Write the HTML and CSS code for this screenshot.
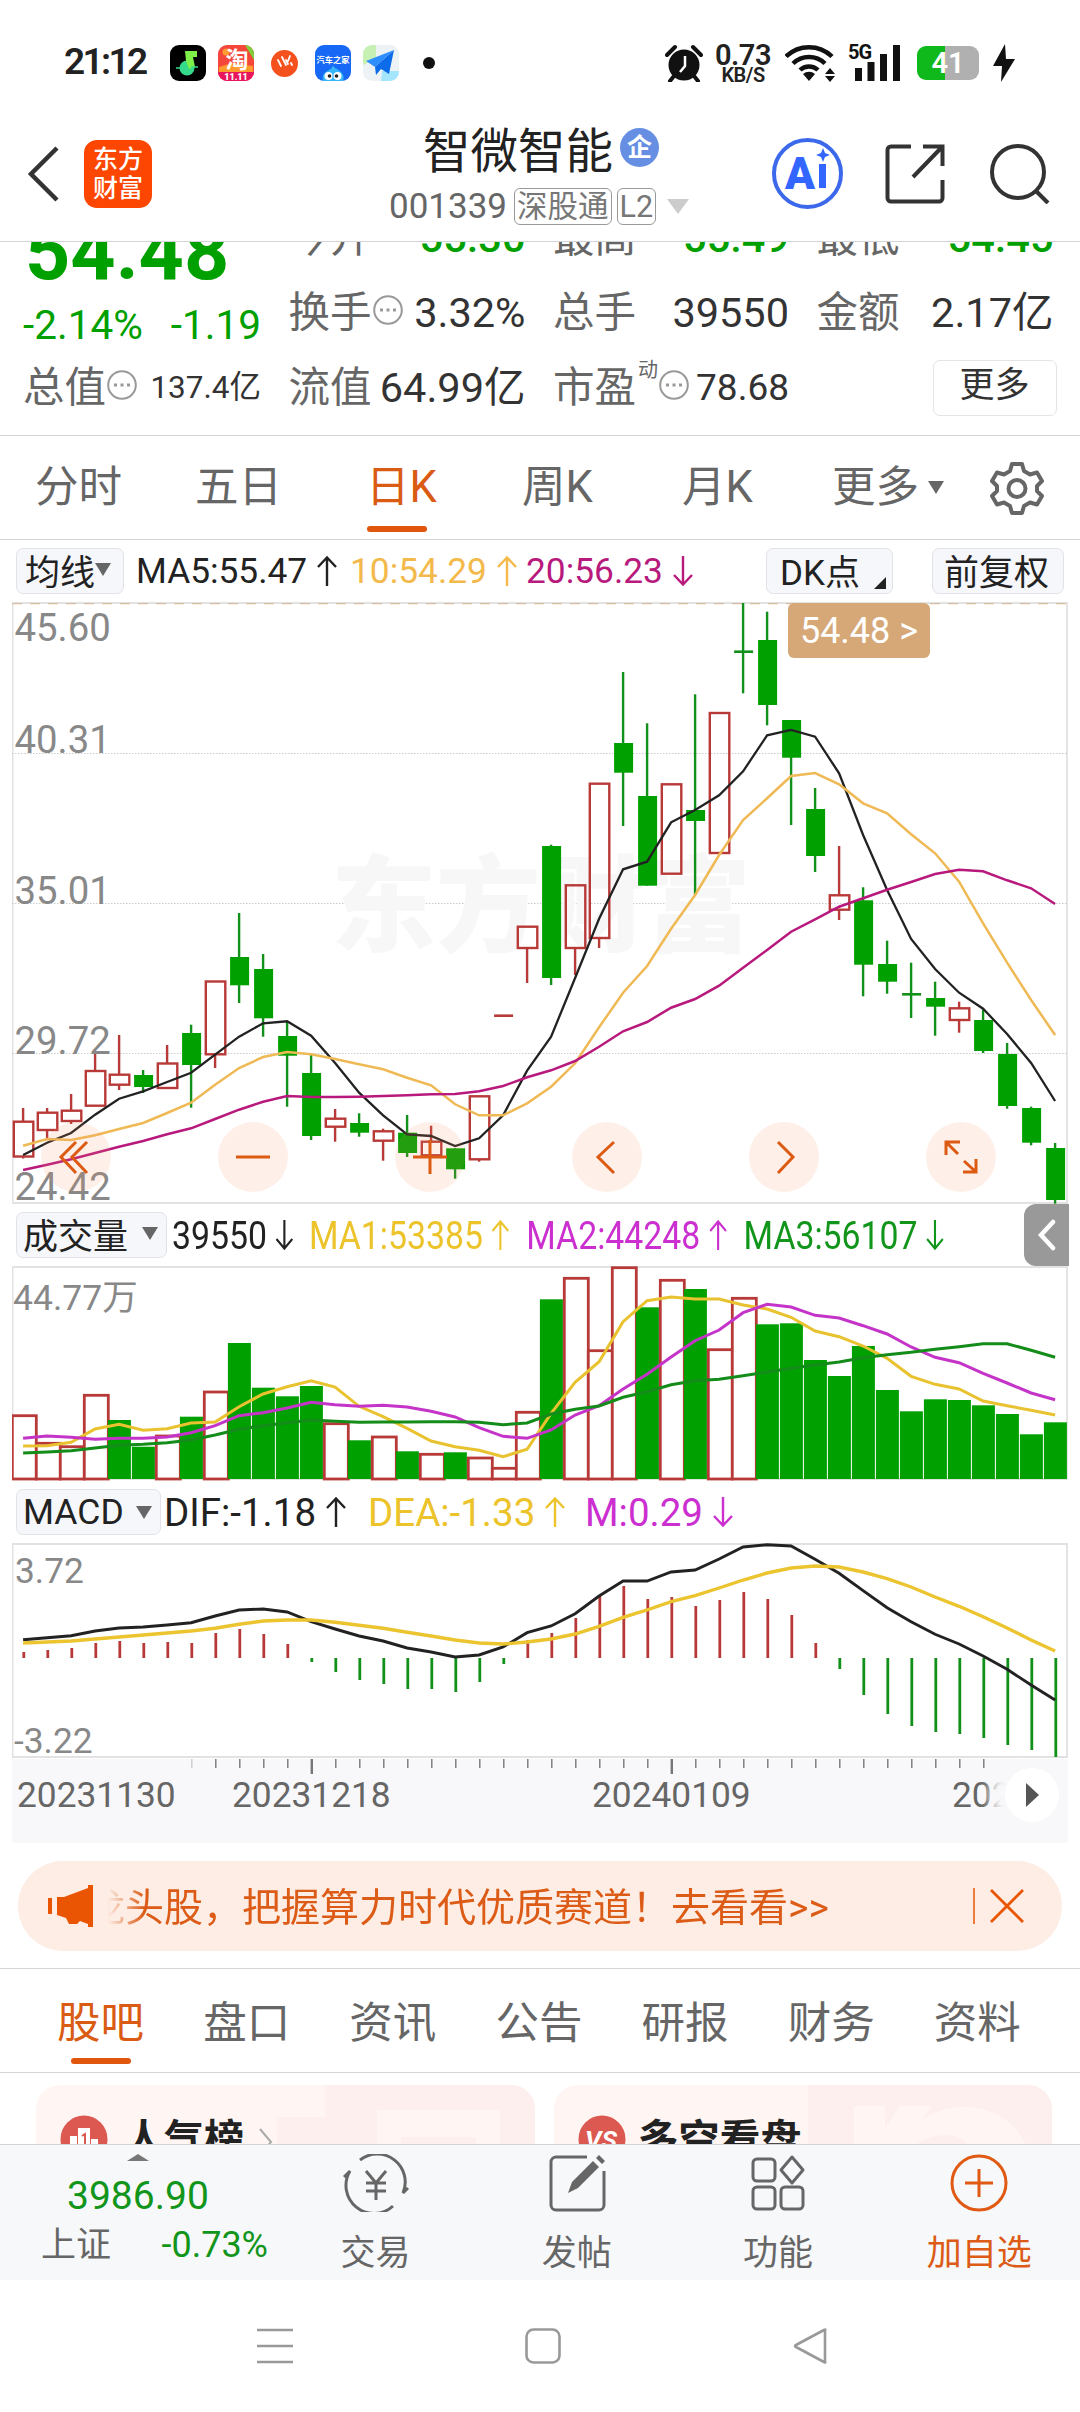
FILE: index.html
```html
<!DOCTYPE html>
<html lang="zh-CN">

<head>
    <meta charset="utf-8">
    <title>智微智能 001339</title>
    <link rel="stylesheet" href="styles.css">
</head>

<body>
    <svg class="defs" width="0" height="0">
        <symbol id="up" viewBox="0 0 20 30"><path d="M10 30V1M1 11L10 1.500L19 11"/></symbol>
        <symbol id="down" viewBox="0 0 20 30"><path d="M10 0V29M1 19L10 28.500L19 19"/></symbol>
        <symbol id="dots" viewBox="0 0 30 30">
            <circle cx="15" cy="15" r="13.800" fill="none" stroke="#999" stroke-width="2"/>
            <path d="M7 15h3M13.500 15h3M20 15h3" stroke="#999" stroke-width="3"/>
        </symbol>
    </svg>

    <!-- status bar -->
    <div class="status">
        <div class="time">21:12</div>
        <div class="apps">
            <svg width="36" height="36" viewBox="0 0 36 36">
                <rect width="36" height="36" rx="9" fill="#000"/>
                <circle cx="17" cy="23" r="7.500" fill="#35d98a"/>
                <path d="M15 6h12v6h-4l2 10-6 2-3-8z" fill="#7df04a"/>
                <path d="M6 23h8M21 22h7" stroke="#35d98a" stroke-width="1.500"/>
            </svg>
            <svg width="36" height="36" viewBox="0 0 36 36">
                <rect width="36" height="36" rx="9" fill="#f4463a"/>
                <path d="M1 22l13-4 21 3v8H1z" fill="#ff9a2e"/>
                <path d="M27 0a9 9 0 0 1 9 9v6z" fill="#7fce3c"/>
                <circle cx="8" cy="7" r="3.500" fill="#ff9b30"/>
                <path d="M0 27h36a9 9 0 0 1-9 9H9a9 9 0 0 1-9-9z" fill="#e8175d"/>
                <text x="19" y="23" class="app-tao">淘</text>
                <text x="18" y="35" class="app-1111">11.11</text>
            </svg>
            <svg class="app-round" width="27" height="27" viewBox="0 0 27 27">
                <circle cx="13.500" cy="13.500" r="13.500" fill="#f4511e"/>
                <path d="M7 10l3 6M11 7l4 8M15 10l2 4M19 6l-2 5M20 13l1 2" stroke="#fff" stroke-width="1.800" fill="none" stroke-linecap="round"/>
            </svg>
            <svg width="36" height="36" viewBox="0 0 36 36">
                <rect width="36" height="36" rx="9" fill="#1769f5"/>
                <text x="18" y="17.500" class="app-car">汽车之家</text>
                <path d="M18 20c0 3 4 3 8 7 3 3 3 6 2 9H8c-1-4 0-7 3-9 4-3 6-3 7-7z" fill="#35b6f7"/>
                <circle cx="13.500" cy="31" r="4" fill="#fff"/><circle cx="22.500" cy="31" r="4" fill="#fff"/>
                <circle cx="14.500" cy="31" r="1.800" fill="#222"/><circle cx="21.500" cy="31" r="1.800" fill="#222"/>
            </svg>
            <svg width="36" height="36" viewBox="0 0 36 36">
                <rect width="36" height="36" rx="9" fill="#edf3f5"/>
                <path d="M0 20V9a9 9 0 0 1 9-9h4v14z" fill="#c6f0b4"/>
                <path d="M18 36l1-10h17v1a9 9 0 0 1-9 9z" fill="#a5e6ff"/>
                <path d="M31 5L3 16l9 6z" fill="#2f8fff"/><path d="M31 5L12 22l1 8 5-6 8 5z" fill="#0c6be8"/>
            </svg>
        </div>
        <div class="dot"></div>
        <svg class="alarm" width="38" height="38" viewBox="0 0 38 38">
            <circle cx="19" cy="21" r="15.500" fill="#111"/>
            <path d="M2 11l8-8M36 11l-8-8M9 32l-4 5M29 32l4 5" stroke="#111" stroke-width="4" stroke-linecap="round"/>
            <path d="M20 12v10l-5 6" stroke="#fff" stroke-width="2.500" fill="none"/>
        </svg>
        <div class="speed"><b>0.73</b><span>KB/S</span></div>
        <svg class="wifi" width="50" height="38" viewBox="0 0 50 38">
            <g fill="none" stroke="#111" stroke-width="4.500">
                <path d="M1 12.500a33 33 0 0 1 46 0M8 19.500a23 23 0 0 1 32 0M15 26a13 13 0 0 1 18 0"/>
            </g>
            <path d="M24 37l-6-7a9 9 0 0 1 12 0zM45 24l5 6H40zM45 38l5-6H40z" fill="#111"/>
        </svg>
        <svg class="signal" width="54" height="38" viewBox="0 0 54 38">
            <text x="0" y="15" class="five-g">5G</text>
            <path d="M7 24h7v13H7zM19.500 18h7v19h-7zM32 10h7v27h-7zM45 1h7v36h-7z" fill="#111"/>
        </svg>
        <div class="battery"><span>41</span></div>
        <svg class="bolt" width="22" height="38" viewBox="0 0 22 38"><path d="M12 0L0 22h9l-1 16L22 15h-9z" fill="#111"/></svg>
    </div>

    <!-- title bar -->
    <div class="header">
        <svg class="back" width="34" height="56" viewBox="0 0 34 56"><path d="M30 2L4 28l26 26" fill="none" stroke="#333" stroke-width="4.500"/></svg>
        <div class="logo">东方<br>财富</div>
        <div class="stock">
            <div class="name">智微智能<span class="ent">企</span></div>
            <div class="code">001339<span class="tag">深股通</span><span class="tag">L2</span><i class="tri"></i></div>
        </div>
        <div class="ai">
            <span>A</span><svg width="14" height="42" viewBox="0 0 14 42" fill="#3366ff"><path d="M3 16h7v24H3zM7 0l2 5 5 2-5 2-2 5-2-5-5-2 5-2z"/></svg>
        </div>
        <svg class="share" width="60" height="60" viewBox="0 0 60 60">
            <path d="M26 2.500H6a3.500 3.500 0 0 0-3.500 3.500v48A3.500 3.500 0 0 0 6 57.500h48a3.500 3.500 0 0 0 3.500-3.500V36M38 2.500h19.500V22M57 3L28 33" fill="none" stroke="#333" stroke-width="4"/>
        </svg>
        <svg class="search" width="60" height="60" viewBox="0 0 60 60">
            <circle cx="28" cy="28" r="26" fill="none" stroke="#333" stroke-width="4"/><path d="M46 47l12 12" stroke="#333" stroke-width="4"/>
        </svg>
    </div>

    <!-- quote, scrolled a little under the header -->
    <div class="quote">
        <div class="quote-grid">
            <div class="price">
                <div class="last">54.48</div>
                <div class="change"><span>-2.14%</span><span>-1.19</span></div>
            </div>
            <div class="cell"><label>今开</label><span class="fall">55.30</span></div>
            <div class="cell"><label>最高</label><span class="fall">55.49</span></div>
            <div class="cell"><label>最低</label><span class="fall">54.45</span></div>
            <div class="cell"><label>换手<svg><use href="#dots"/></svg></label><span>3.32%</span></div>
            <div class="cell"><label>总手</label><span>39550</span></div>
            <div class="cell"><label>金额</label><span>2.17亿</span></div>
            <div class="cell"><label>总值<svg><use href="#dots"/></svg></label><span class="small">137.4亿</span></div>
            <div class="cell"><label>流值</label><span>64.99亿</span></div>
            <div class="cell"><label>市盈<sup>动</sup><svg><use href="#dots"/></svg></label><span class="mid">78.68</span></div>
            <div class="cell"><div class="more">更多</div></div>
        </div>
    </div>

    <!-- period tabs -->
    <div class="periods">
        <div>分时</div>
        <div>五日</div>
        <div class="on">日K</div>
        <div>周K</div>
        <div>月K</div>
        <div class="drop">更多<i class="tri"></i></div>
        <svg width="54" height="54" viewBox="0 0 54 54" fill="none" stroke="#666" stroke-width="4">
            <path d="M22 3h10l2 7 6 3.500 7-2 5 8.500-5 5v5l5 5-5 8.500-7-2-6 3.500-2 7H22l-2-7-6-3.500-7 2L2 35l5-5v-5l-5-5 5-8.500 7 2 6-3.500z" stroke-linejoin="round"/>
            <circle cx="27" cy="27.500" r="8.500"/>
        </svg>
    </div>

    <!-- k line -->
    <div class="legend ma">
        <div class="pick">均线<i class="tri"></i></div>
        <span class="black">MA5:55.47<svg><use href="#up"/></svg></span>
        <span class="amber">10:54.29<svg><use href="#up"/></svg></span>
        <span class="plum">20:56.23<svg><use href="#down"/></svg></span>
        <div class="pick dk">DK点<i></i></div>
        <div class="pick">前复权</div>
    </div>
    <div class="chart kline">
        <svg id="kline" viewBox="12 602 1056 602" width="1056" height="602"></svg>
        <div class="last-tag">54.48 &gt;</div>
        <div class="tools">
            <svg viewBox="-35 -35 70 70"><path d="M0-15L-15 0 0 16M11-15L-4 0 11 16"/></svg>
            <svg viewBox="-35 -35 70 70"><path d="M-17 0H17"/></svg>
            <svg viewBox="-35 -35 70 70"><path d="M-17 0H17M0-17V17"/></svg>
            <svg viewBox="-35 -35 70 70"><path d="M7-15L-9 0 7 16"/></svg>
            <svg viewBox="-35 -35 70 70"><path d="M-6-15L9 0-6 16"/></svg>
            <svg viewBox="-35 -35 70 70"><path d="M-1-15H-15V-2M-15-15L-3-3M3 4L15 15M2 15H15V2"/></svg>
        </div>
    </div>

    <!-- volume -->
    <div class="legend vol">
        <div class="pick">成交量<i class="tri"></i></div>
        <div class="squeeze">
            <span class="black">39550<svg><use href="#down"/></svg></span>
            <span class="yellow">MA1:53385<svg><use href="#up"/></svg></span>
            <span class="violet">MA2:44248<svg><use href="#up"/></svg></span>
            <span class="green">MA3:56107<svg><use href="#down"/></svg></span>
        </div>
        <div class="fold"><svg width="20" height="32" viewBox="0 0 20 32"><path d="M16 3L4 16l12 13" fill="none" stroke="#fff" stroke-width="4.500" stroke-linecap="round"/></svg></div>
    </div>
    <div class="chart">
        <svg id="volume" viewBox="12 1266 1056 215" width="1056" height="215"></svg>
    </div>

    <!-- macd -->
    <div class="legend macd">
        <div class="pick">MACD<i class="tri"></i></div>
        <span class="black">DIF:-1.18<svg><use href="#up"/></svg></span>
        <span class="yellow">DEA:-1.33<svg><use href="#up"/></svg></span>
        <span class="violet">M:0.29<svg><use href="#down"/></svg></span>
    </div>
    <div class="chart">
        <svg id="macd" viewBox="12 1543 1056 216" width="1056" height="216"></svg>
    </div>
    <div class="axis">
        <svg id="axis" viewBox="12 1759 1056 84" width="1056" height="84"></svg>
        <div class="next"></div>
    </div>

    <!-- notice -->
    <div class="notice">
        <svg width="48" height="42" viewBox="0 0 48 42" fill="#ea5504"><path d="M0 13h4v16H0zM9 12h7L40 3V0h5v42h-5v-3l-8-3-3 3h-8l-3-6-9-3z"/></svg>
        <div class="marquee"><span>龙头股，把握算力时代优质赛道！去看看&gt;&gt;</span></div>
        <svg class="close" width="52" height="36" viewBox="0 0 52 36" fill="none" stroke="#ea5504"><path d="M1 0v36" stroke-width="1.500"/><path d="M18 2l32 32M50 2L18 34" stroke-width="2.800"/></svg>
    </div>

    <div class="sections">
        <div class="on">股吧</div>
        <div>盘口</div>
        <div>资讯</div>
        <div>公告</div>
        <div>研报</div>
        <div>财务</div>
        <div>资料</div>
    </div>

    <div class="cards">
        <div class="card">
            <svg width="48" height="48" viewBox="0 0 48 48">
                <circle cx="24" cy="24" r="23.500" fill="#db5950"/>
                <path d="M10 21h7v20h-7zM31 24h7v17h-7zM18 13h12v28H18z" fill="#fff"/>
                <path d="M22 21l3-2v14" stroke="#db5950" stroke-width="2" fill="none"/>
            </svg>
            <b>人气榜</b>
            <svg class="chev" width="14" height="28" viewBox="0 0 14 28"><path d="M1 1l11 13L1 27" fill="none" stroke="#aaa" stroke-width="2"/></svg>
            <svg class="deco" width="210" height="60" viewBox="0 0 210 60"><path d="M0 0h210v60H-48V32H0z" fill="#fdefed"/><path d="M52 25h123v35h-24v-8H76v8H52z" fill="#fff5f3"/></svg>
        </div>
        <div class="card">
            <svg width="48" height="48" viewBox="0 0 48 48"><circle cx="24" cy="24" r="23.500" fill="#db5950"/><text x="23" y="34" class="vs">VS</text></svg>
            <b class="wide">多空看盘</b>
            <svg class="deco" width="244" height="60" viewBox="0 0 244 60"><path d="M0 0h244v60H0z" fill="#fdefed"/><path d="M46 21h31v22l15-22h32l-12 16c24-22 84-24 106 23h-60c0-12-36-14-50 0H68V43v17H46z" fill="#fff5f3"/></svg>
        </div>
    </div>

    <!-- bottom bar -->
    <div class="bottom">
        <div class="index">
            <i class="caret"></i>
            <strong>3986.90</strong>
            <div><label>上证</label><span>-0.73%</span></div>
        </div>
        <div class="item">
            <svg width="66" height="58" viewBox="0 0 66 58" fill="none" stroke="#666" stroke-width="3">
                <path d="M17 6a28 28 0 0 1 43 33l5-5M50 52A28 28 0 0 1 7 17l-6 6"/>
                <path d="M23 17l10 12 10-12M23 29h20M23 37h20M33 29v17"/>
            </svg>
            交易
        </div>
        <div class="item">
            <svg width="58" height="58" viewBox="0 0 58 58" fill="none" stroke="#666" stroke-width="3">
                <path d="M39 3H8a5 5 0 0 0-5 5v43a5 5 0 0 0 5 5h43a5 5 0 0 0 5-5V17"/>
                <path d="M20 39l4-11L45 7l6 6-21 21zM48 4l3-3 6 6-3 3z" fill="#666" stroke="none"/>
            </svg>
            发帖
        </div>
        <div class="item">
            <svg width="54" height="58" viewBox="0 0 54 58" fill="none" stroke="#666" stroke-width="3">
                <rect x="2" y="5" width="22" height="22" rx="4"/><rect x="2" y="33" width="22" height="22" rx="4"/><rect x="30" y="33" width="22" height="22" rx="4"/>
                <path d="M41 3l11 13-11 13-11-13z" stroke-linejoin="round"/>
            </svg>
            功能
        </div>
        <div class="item add">
            <svg width="58" height="58" viewBox="0 0 58 58" fill="none" stroke="#e05a14" stroke-width="3"><circle cx="29" cy="29" r="27"/><path d="M15 29h28M29 15v28"/></svg>
            加自选
        </div>
    </div>

    <!-- system keys -->
    <div class="keys">
        <svg width="36" height="36" viewBox="0 0 36 36"><path d="M0 2h36M0 18h36M0 34h36"/></svg>
        <svg width="36" height="36" viewBox="0 0 36 36"><rect x="1.500" y="1.500" width="33" height="33" rx="7"/></svg>
        <svg width="36" height="36" viewBox="0 0 36 36"><path d="M32 2v32q1 1-1 0L3 19q-2-1 0-2L31 2q2-1 1 0z"/></svg>
    </div>

    <script src="charts.js"></script>
</body>

</html>
```
FILE: styles.css
```css
* {
    box-sizing: border-box;
}

body {
    margin: 0;
    width: 1080px;
    height: 2412px;
    overflow: hidden;
    background: #fff;
    color: #222;
    font-family: Roboto, "Noto Sans CJK SC", sans-serif;
}

svg {
    display: block;
    flex: none;
}

.defs {
    position: absolute;
}

.tri {
    border: 8px solid transparent;
    border-top: 13px solid #666;
    border-bottom: 0;
}

/* status bar */
.status {
    display: flex;
    align-items: center;
    height: 106px;
    padding: 20px 0 0 64px;
}

.time {
    width: 106px;
    margin-top: -3px;
    font-size: 37px;
    font-weight: 600;
    letter-spacing: -2.6px;
}

.apps {
    display: flex;
    align-items: center;
    gap: 12px;
}

.app-round {
    margin: 0 5px;
}

.app-tao {
    font-size: 23px;
    font-weight: 700;
    fill: #fff;
    text-anchor: middle;
}

.app-1111 {
    font-size: 9px;
    font-weight: 900;
    fill: #fff;
    text-anchor: middle;
}

.app-car {
    font-size: 8.2px;
    font-weight: 700;
    fill: #fff;
    text-anchor: middle;
}

.dot {
    width: 12px;
    height: 12px;
    margin: 0 230px 0 24px;
    border-radius: 50%;
    background: #111;
}

.speed {
    display: flex;
    flex-direction: column;
    align-items: center;
    width: 54px;
    margin: 0 15px 0 13px;
    font-size: 20px;
    font-weight: 600;
    letter-spacing: -0.5px;
    line-height: 17px;
}

.speed b {
    font-size: 29px;
    font-weight: 600;
    line-height: 24px;
}

.signal {
    margin: 0 15px 0 13px;
}

.five-g {
    font-size: 20px;
    font-weight: 700;
    letter-spacing: -1px;
    fill: #111;
}

.battery {
    width: 62px;
    height: 34px;
    margin-right: 14px;
    border-radius: 9px;
    background: linear-gradient(90deg, #0fb91c 28px, #b0b0b0 28px);
    color: #fff;
    font-size: 29px;
    font-weight: 600;
    line-height: 35px;
    text-align: center;
}

/* title bar */
.header {
    display: flex;
    align-items: center;
    height: 136px;
    padding: 0 28px 0 27px;
    border-bottom: 1.5px solid #d4d4d8;
}

.logo {
    width: 68px;
    height: 68px;
    margin-left: 23px;
    border-radius: 13px;
    background: #fd4602;
    color: #fff;
    font-size: 25px;
    font-weight: 500;
    line-height: 29px;
    padding-top: 5px;
    text-align: center;
}

.stock {
    width: 310px;
    margin-left: 237px;
}

.name {
    display: flex;
    align-items: center;
    height: 60px;
    margin: 5px 0 0 34px;
    font-size: 47.5px;
}

.ent {
    width: 39px;
    height: 39px;
    margin-left: 7px;
    border-radius: 50%;
    background: #668fe3;
    color: #fff;
    font-size: 25px;
    font-weight: 700;
    line-height: 39px;
    text-align: center;
}

.code {
    display: flex;
    align-items: center;
    height: 58px;
    color: #666;
    font-size: 35px;
}

.code .tag {
    height: 37px;
    margin-left: 7px;
    padding: 0 2px;
    border: 1.5px solid #999;
    border-radius: 6px;
    color: #777;
    font-size: 30.5px;
    line-height: 35px;
}

.code .tag + .tag {
    margin-left: 5px;
}

.code .tri {
    margin-left: 11px;
    border-width: 15px 11px 0;
    border-color: #ccc transparent;
}

.ai {
    display: flex;
    align-items: center;
    justify-content: center;
    gap: 1px;
    width: 71px;
    height: 71px;
    margin-left: 73px;
    border: 4px solid #3c69eb;
    border-radius: 50%;
    color: #3366ff;
    font-size: 44px;
    font-weight: 900;
}

.ai svg {
    margin-top: -10px;
}

.share {
    margin-left: 42px;
}

.search {
    margin-left: 45px;
}

/* quote */
.quote {
    height: 194px;
    overflow: hidden;
    border-bottom: 1.5px solid #d4d4d8;
}

.quote-grid {
    display: grid;
    grid-template-columns: 238px 237px 236px 237px;
    grid-auto-rows: 75px;
    column-gap: 27.5px;
    margin-top: -42px;
    padding-left: 23px;
}

.price {
    grid-row: span 2;
    padding-top: 12px;
    color: #00a000;
}

.last {
    height: 80px;
    padding-left: 2px;
    font-size: 79px;
    font-weight: 700;
    line-height: 80px;
}

.change {
    display: flex;
    justify-content: space-between;
    margin-top: 9px;
    font-size: 40.5px;
    line-height: 48px;
}

.cell {
    display: flex;
    align-items: center;
    justify-content: space-between;
    font-size: 41.5px;
    line-height: 48px;
    color: #333;
}

.cell label {
    display: flex;
    align-items: center;
    color: #666;
}

.cell label svg {
    width: 30px;
    height: 30px;
    margin: -6px 0 0 1px;
}

.cell sup {
    align-self: flex-start;
    margin: -18px 0 0 2px;
    font-size: 20px;
}

.cell .small {
    font-size: 31.5px;
}

.cell .mid {
    font-size: 37px;
}

.cell .fall {
    color: #00a000;
    font-weight: 500;
}

.more {
    width: 124px;
    height: 56px;
    margin: 0 -3px 0 auto;
    border: 1.5px solid #e3e4e8;
    border-radius: 7px;
    font-size: 35px;
    line-height: 50px;
    text-align: center;
}

/* tabs */
.periods {
    display: flex;
    align-items: center;
    height: 104px;
    padding-left: 35px;
    border-bottom: 1.5px solid #d4d4d8;
    color: #666;
    font-size: 43.5px;
    line-height: 103px;
}

.periods > div {
    width: 158px;
    white-space: nowrap;
}

.periods > div:first-child {
    width: 160px;
}

.periods > div:nth-child(2) {
    width: 171px;
}

.periods > div:nth-child(3) {
    width: 156px;
}

.periods > div:nth-child(4) {
    width: 160px;
}

.periods > div:nth-child(5) {
    width: 150px;
}

.periods .drop {
    display: flex;
    align-items: center;
    gap: 9px;
}

.on {
    position: relative;
    color: #d95b14;
}

.on::after {
    content: "";
    position: absolute;
    left: 1px;
    bottom: 7px;
    width: 60px;
    height: 6px;
    border-radius: 3px;
    background: #e0560c;
}

/* chart legends */
.legend {
    display: flex;
    align-items: center;
    padding-left: 16px;
    white-space: nowrap;
}

.legend span {
    display: flex;
    align-items: center;
}

.legend span svg {
    width: 20px;
    height: 30px;
    margin-left: 10px;
    fill: none;
    stroke: currentColor;
    stroke-width: 2.4;
}

.pick {
    display: flex;
    align-items: center;
    height: 46px;
    padding: 0 6px 3px;
    border: 1.5px solid #e1e3e8;
    border-radius: 7px;
    background: #f6f7fa;
    color: #222;
    font-size: 35px;
}

.ma {
    height: 62px;
    padding-right: 16px;
    font-size: 35.3px;
}

.ma .pick {
    width: 108px;
    padding-left: 8px;
}

.ma .black {
    margin-left: 12px;
    width: 214px;
}

.ma .amber {
    width: 176px;
}

.ma .plum {
    width: 240px;
}

.ma .dk {
    position: relative;
    width: 127px;
    margin-right: auto;
    padding-left: 13px;
}

.dk i {
    position: absolute;
    right: 6px;
    bottom: 4px;
    border: 6px solid #222;
    border-top-color: transparent;
    border-left-color: transparent;
}

.ma .pick:last-child {
    width: 132px;
    padding-left: 11px;
}

.vol {
    height: 62px;
    font-size: 38.5px;
}

.vol .pick {
    width: 151px;
    justify-content: space-between;
    padding-right: 8px;
}

.squeeze {
    display: flex;
    width: 996px;
    margin: 0 -144px 0 5px;
    transform: scaleX(0.878);
    transform-origin: left;
}

.squeeze span {
    width: 247.5px;
}

.squeeze .black {
    width: 156px;
}

.macd {
    height: 62px;
    font-size: 38.5px;
}

.macd .pick {
    width: 145px;
    justify-content: space-between;
    padding-right: 8px;
    padding-bottom: 0;
    font-size: 35.5px;
}

.macd span {
    width: 217px;
}

.macd .black {
    width: 204px;
    margin-left: 3px;
}

.fold {
    display: flex;
    align-items: center;
    justify-content: center;
    width: 45px;
    height: 62px;
    border-radius: 12px 0 0 12px;
    background: #999;
}

.black { color: #222; }
.amber { color: #f3b94b; }
.plum { color: #b8197c; }
.yellow { color: #ecc32a; }
.violet { color: #cb2fd0; }
.green { color: #12951b; }

/* charts */
.chart {
    position: relative;
    margin: 0 12px;
}

.grid {
    fill: none;
    stroke: #e2e2e2;
    stroke-width: 1.8;
}

.dotted {
    stroke: #ccc;
    stroke-width: 1;
    stroke-dasharray: 1.5 1.5;
}

.dashed {
    stroke: #d9bfa2;
    stroke-width: 1.2;
    stroke-dasharray: 10 8;
}

.watermark {
    font-size: 105px;
    font-weight: 900;
    fill: #f7f7f7;
}

.scale {
    font-size: 38.3px;
    fill: #888;
}

.date {
    font-size: 35.3px;
    fill: #666;
}

.vs {
    font-size: 26px;
    font-weight: 700;
    font-style: italic;
    fill: #fff;
    text-anchor: middle;
}

.last-tag {
    position: absolute;
    top: 1px;
    left: 776px;
    width: 142px;
    height: 55px;
    border-radius: 6px;
    background: #d6a878;
    color: #fff;
    font-size: 36px;
    line-height: 56px;
    text-align: center;
}

.tools {
    position: absolute;
    left: 29px;
    right: 72px;
    bottom: 12px;
    display: flex;
    justify-content: space-between;
}

.tools svg {
    width: 70px;
    height: 70px;
    border-radius: 50%;
    background: rgba(250, 150, 100, 0.14);
    fill: none;
    stroke: #dd5a12;
    stroke-width: 3;
}

.axis {
    position: relative;
    height: 84px;
    margin: 0 12px;
    background: #f8f8fa;
}

.next {
    position: absolute;
    right: 9px;
    top: 9px;
    width: 54px;
    height: 54px;
    border-radius: 50%;
    background: #fff;
    box-shadow: -12px 0 12px 4px #f8f8fa;
}

.next::after {
    content: "";
    position: absolute;
    left: 21px;
    top: 15px;
    border: 12px solid transparent;
    border-left: 13px solid #555;
    border-right: 0;
}

/* notice */
.notice {
    display: flex;
    align-items: center;
    height: 90px;
    margin: 18px 18px 17px;
    padding: 0 37px 0 30px;
    border-radius: 45px;
    background: #fdede4;
    color: #dc5b16;
    font-size: 39px;
}

.marquee {
    width: 840px;
    margin: -5px 0 0 12px;
    overflow: hidden;
    white-space: nowrap;
    -webkit-mask-image: linear-gradient(90deg, transparent, #000 36px);
    mask-image: linear-gradient(90deg, transparent, #000 36px);
}

.marquee span {
    margin-left: -22px;
}

.close {
    margin-left: auto;
}

.sections {
    display: flex;
    height: 105px;
    padding-left: 57px;
    border-top: 1.5px solid #d4d4d8;
    border-bottom: 1.5px solid #d4d4d8;
    color: #666;
    font-size: 43.5px;
    line-height: 110px;
}

.sections div {
    width: 146.5px;
}

.sections .on::after {
    left: 14px;
    bottom: 8px;
}

/* cards, cut by the bottom bar */
.cards {
    display: flex;
    gap: 19px;
    height: 71px;
    padding: 12px 28px 0 36px;
    overflow: hidden;
}

.card {
    position: relative;
    display: flex;
    width: 499px;
    height: 150px;
    padding: 30px 24px;
    border-radius: 24px;
    background: #fff5f3;
    overflow: hidden;
}

.card > * {
    z-index: 1;
}

.card b {
    margin-left: 16px;
    font-size: 40px;
    font-weight: 700;
    line-height: 50px;
}

.card .wide {
    margin-left: 12px;
    font-size: 41px;
}

.chev {
    margin: 13px 0 0 15px;
}

.card .deco {
    position: absolute;
    right: 0;
    top: 0;
    z-index: 0;
    overflow: visible;
}

/* bottom bar */
.bottom {
    display: flex;
    height: 136px;
    border-top: 1.5px solid #d4d4d8;
    background: #f7f8fa;
}

.index {
    width: 275px;
    padding: 9px 7px 0 41px;
    color: #12951b;
}

.caret {
    display: block;
    width: 0;
    margin-left: 86px;
    border: 11px solid transparent;
    border-bottom: 7px solid #777;
    border-top: 0;
}

.index strong {
    display: block;
    margin: 11px 0 0 26px;
    font-size: 39px;
    font-weight: 400;
    line-height: 48px;
}

.index div {
    display: flex;
    justify-content: space-between;
    font-size: 36px;
    line-height: 51px;
}

.index label {
    color: #666;
    font-size: 35px;
}

.item {
    display: flex;
    flex-direction: column;
    align-items: center;
    width: 201.2px;
    padding-top: 9px;
    color: #666;
    font-size: 35px;
    line-height: 50px;
}

.item svg {
    margin-bottom: 17px;
}

.item.add {
    color: #dc5b16;
}

/* system keys */
.keys {
    display: flex;
    gap: 232px;
    height: 132px;
    padding: 48px 0 0 257px;
}

.keys svg {
    fill: none;
    stroke: #999;
    stroke-width: 2.6;
}
```
FILE: charts.js
```js
const RED = '#b83a38', GREEN = '#00a000', GREEN_LINE = '#12901a';
const STEP = 24, FIRST = 23.1;
const px = i => FIRST + i * STEP;

// [body top, body bottom, high, low], r = rising / g = falling
const candles = [
    ['r', 1121.7, 1156.5, 1108, 1158.5], ['r', 1112.7, 1130, 1108, 1139], ['r', 1110.7, 1121, 1094, 1124],
    ['r', 1071, 1105.7, 1054, 1105.7], ['r', 1074.7, 1084.7, 1035, 1090], ['g', 1075, 1087, 1070, 1093],
    ['r', 1063.5, 1088, 1045, 1088], ['g', 1033, 1065, 1024.7, 1107.7], ['r', 981.5, 1054.3, 981.5, 1068],
    ['g', 957, 985.3, 913, 1003], ['g', 969, 1018.3, 954, 1036.7], ['g', 1036, 1055.7, 1022, 1106.7],
    ['g', 1073, 1136, 1055, 1140], ['r', 1118.7, 1126.7, 1109, 1141.7], ['g', 1123, 1132.7, 1113.3, 1136.7],
    ['r', 1131.3, 1140.7, 1128.7, 1160.7], ['g', 1132.7, 1153, 1115, 1157], ['r', 1141.7, 1155.3, 1125.7, 1155.3],
    ['g', 1148.3, 1169.3, 1148.3, 1178.7], ['r', 1096.3, 1159.3, 1096.3, 1161.7], ['r', 1015.7, 1015.7, 1015.7, 1015.7],
    ['r', 926.7, 948, 926.7, 983], ['g', 846, 978, 844.7, 985], ['r', 885.3, 948, 885.3, 975],
    ['r', 783.7, 938, 783.7, 948], ['g', 743, 772.7, 672, 826], ['g', 796, 885.7, 723.3, 885.7],
    ['r', 784.3, 873.7, 784.3, 873.7], ['g', 810, 821, 694.3, 895], ['r', 713, 853, 713, 853],
    ['g', 651.7, 651.7, 603, 693.3], ['g', 640, 705, 611.7, 725.3], ['g', 720, 757.7, 720, 825],
    ['g', 809, 856, 788, 872], ['r', 895.3, 909.7, 846, 920], ['g', 900.3, 964.7, 887.3, 996.3],
    ['g', 964, 981.7, 940.7, 993.7], ['g', 994.3, 994.3, 962.7, 1018], ['g', 998, 1006.7, 981.7, 1035.7],
    ['r', 1008.3, 1020, 1001.7, 1032.7], ['g', 1020, 1051, 1009.3, 1053], ['g', 1054, 1106, 1043, 1108.7],
    ['g', 1108, 1142.7, 1106.7, 1145.3], ['g', 1148, 1200, 1143, 1203.7]
];
const ma5 = [1155, 1142.7, 1133, 1114.7, 1098.7, 1091.3, 1082, 1072.7, 1054.7, 1036.7, 1023.3, 1021.3, 1035.7, 1063, 1092.7, 1115.3, 1134.3, 1136, 1146, 1138.3, 1115.3, 1070.7, 1036.7, 978, 918.7, 869.3, 861.7, 822.3, 810, 795.3, 771.3, 735.3, 730, 736.7, 773.3, 835, 890, 939, 969, 992.7, 1008.7, 1034, 1063, 1101];
const ma10 = [1145.7, 1139, 1140, 1135.3, 1129, 1123, 1113, 1102.7, 1084.7, 1068, 1057, 1052, 1054.3, 1059, 1064.3, 1069.3, 1077.7, 1085.3, 1104.3, 1115.3, 1115.3, 1103.3, 1086.7, 1063.3, 1027.3, 992.7, 966, 928.7, 895, 855, 820, 798.3, 776, 773, 784.3, 803.3, 813.3, 834.3, 853.3, 881.7, 923.3, 962.7, 1000, 1035];
const ma20 = [1170, 1164.7, 1159.3, 1153, 1146.7, 1141, 1134.3, 1128.3, 1119, 1109.7, 1101.7, 1096, 1097, 1097, 1096.7, 1096, 1095.3, 1094.3, 1094, 1091.3, 1086, 1077.3, 1070.3, 1061, 1046.7, 1031.3, 1022, 1007.7, 999, 985.7, 967.7, 950, 931.7, 919.3, 906.7, 898.3, 889.7, 882, 874, 869.7, 871.3, 880.3, 888.3, 904];

const volumes = [1415.7, 1443.3, 1446.7, 1395.3, 1420, 1446.7, 1436, 1416.7, 1392, 1343, 1387.7, 1396.3, 1386, 1423.7, 1440.3, 1437, 1451.3, 1454.3, 1452.3, 1458, 1468.3, 1412.3, 1299.3, 1278.3, 1350.7, 1267.7, 1307.3, 1280.3, 1289, 1349.7, 1298.3, 1324.3, 1323.3, 1360, 1376, 1346, 1390, 1411.3, 1399.3, 1400, 1405.3, 1414, 1434.3, 1422.3];
const volRising = [0, 1, 2, 3, 6, 8, 13, 15, 17, 19, 20, 21, 23, 24, 25, 27, 29, 30];
const vma1 = [1446, 1445.7, 1442.3, 1429, 1424.3, 1430.3, 1428.7, 1423, 1422, 1406.7, 1394, 1386.7, 1380.7, 1387, 1406.3, 1416.7, 1428.3, 1441, 1446.7, 1450.3, 1456.7, 1449.3, 1413.3, 1382.3, 1361.7, 1321.7, 1300.7, 1297, 1299, 1299, 1305, 1309, 1317.3, 1331, 1336.7, 1346, 1358.3, 1376.3, 1384.3, 1389, 1401, 1405.7, 1410.3, 1415];
const vma2 = [1438.3, 1436, 1437.3, 1439.3, 1438.3, 1438.3, 1437, 1432.7, 1425.7, 1415.7, 1412.7, 1408, 1402.3, 1404.7, 1406.3, 1405.3, 1407, 1411.3, 1417, 1427.7, 1436.3, 1438.3, 1430, 1415, 1405.7, 1389, 1374.3, 1357, 1340.7, 1330, 1312.7, 1304.3, 1307, 1315.3, 1318, 1325.7, 1334, 1347, 1357.3, 1362.7, 1373.3, 1383, 1393, 1399.7];
const vma3 = [1453, 1452, 1450.7, 1448, 1445.3, 1444.3, 1442.7, 1440, 1435, 1429.3, 1425.7, 1422.7, 1420, 1421.3, 1422.3, 1422, 1422, 1421.7, 1421.7, 1422.3, 1424.7, 1423, 1414, 1409.3, 1406, 1397.3, 1391.7, 1384.7, 1380.7, 1379.3, 1375.7, 1372, 1368.3, 1365, 1362, 1357.7, 1354.7, 1352.3, 1349.3, 1346.7, 1343.7, 1343.7, 1350.3, 1357.3];

const ZERO = 1658;
const bars = [1652, 1650, 1648, 1643, 1641, 1643, 1642, 1643, 1633, 1629, 1634, 1644, 1662, 1672, 1680, 1684, 1689, 1689, 1692, 1682, 1664, 1640, 1633, 1618, 1596, 1586, 1599, 1597, 1606, 1600, 1592, 1599, 1615, 1643, 1669, 1695, 1714, 1726, 1732, 1734, 1738, 1745, 1750, 1757];
const dif = [1639.7, 1637.7, 1635.7, 1631, 1628, 1627, 1625, 1622.7, 1616, 1610, 1609, 1612, 1621.7, 1629, 1636, 1641, 1648, 1652, 1657, 1655, 1647, 1632.7, 1626, 1613.7, 1596, 1581, 1581, 1572, 1570, 1559, 1547, 1544.7, 1546, 1559.3, 1573.3, 1590.7, 1607.7, 1621.7, 1634.3, 1644, 1656, 1669.3, 1685, 1700];
const dea = [1643, 1642, 1641, 1639, 1637, 1635, 1633, 1631, 1628.3, 1624.3, 1621, 1620, 1620, 1622.3, 1625.3, 1628.3, 1632.3, 1636, 1640, 1643, 1644, 1642, 1639, 1634, 1626.3, 1617.3, 1610, 1601.7, 1595.7, 1588, 1580, 1573, 1568, 1566, 1567, 1572, 1578.7, 1587, 1597, 1606.3, 1616.7, 1628, 1640, 1651];

const line = (ys, color, w) =>
    `<polyline points="${ys.map((y, i) => px(i) + ',' + y).join(' ')}" fill="none" stroke="${color}" stroke-width="${w}"/>`;
const vline = (x, y1, y2, color, w) =>
    `<path d="M${x} ${y1}V${y2}" stroke="${color}" stroke-width="${w}"/>`;
const text = (x, y, s, cls) => `<text x="${x}" y="${y}" class="${cls}">${s}</text>`;

function drawKline() {
    let s = '<path class="grid" d="M12.600 603H1067V1203H12.600z"/><path class="dashed" d="M12 603.700H1067"/>';
    for (const y of [753.5, 903.5, 1053.5])
        s += `<path class="dotted" d="M12 ${y}H1067"/>`;
    s += text(331, 943, '东方财富', 'watermark');
    candles.forEach(([kind, top, bottom, high, low], i) => {
        const x = px(i), flat = top === bottom;
        if (flat || kind === 'g')
            s += vline(x, high, low, kind === 'g' ? GREEN_LINE : RED, 2.4);
        if (flat)
            s += `<path d="M${x - 9} ${top}h19" stroke="${kind === 'g' ? GREEN_LINE : RED}" stroke-width="2.600"/>`;
        else if (kind === 'g')
            s += `<rect x="${x - 9}" y="${top}" width="19" height="${bottom - top}" fill="${GREEN}"/>`;
        else
            s += vline(x, high, top, RED, 2.4) + vline(x, bottom, low, RED, 2.4) +
                `<rect x="${x - 9.3}" y="${top}" width="19.500" height="${bottom - top}" fill="none" stroke="${RED}" stroke-width="2.400"/>`;
    });
    s += line(ma5, '#222', 2.3) + line(ma10, '#efb955', 2.5) + line(ma20, '#b8197c', 2.5);
    [['45.60', 641], ['40.31', 753], ['35.01', 904], ['29.72', 1054], ['24.42', 1200]]
        .forEach(([v, y]) => s += text(14.5, y, v, 'scale'));
    document.getElementById('kline').innerHTML = s;
}

function drawVolume() {
    let s = '<path class="grid" d="M12.600 1267H1067V1479H12.600z"/>';
    s += `<text x="13" y="1310" class="scale" style="font-size:35.500px">44.77万</text>`;
    volumes.forEach((top, i) => {
        const x = px(i), h = 1479 - top;
        s += volRising.includes(i)
            ? `<rect x="${x - 10.8}" y="${top}" width="24" height="${h}" fill="#fff" stroke="${RED}" stroke-width="2.800"/>`
            : `<rect x="${x - 11.2}" y="${top}" width="23" height="${h}" fill="${GREEN}"/>`;
    });
    s += line(vma1, '#e8c22f', 3) + line(vma2, '#c534c8', 3) + line(vma3, '#148c1a', 3);
    document.getElementById('volume').innerHTML = s;
}

function drawMacd() {
    let s = '<path class="grid" d="M12.600 1544H1067V1757H12.600z"/>';
    bars.forEach((y, i) => s += vline(px(i) + 0.7, ZERO, y, y < ZERO ? RED : GREEN_LINE, 2.8));
    s += line(dif, '#222', 2.9) + line(dea, '#ebc42f', 3.4);
    s += `<text x="15" y="1583" class="date" style="fill:#888">3.72</text><text x="14" y="1753" class="date" style="fill:#888">-3.22</text>`;
    document.getElementById('macd').innerHTML = s;
}

function drawAxis() {
    let s = '';
    for (let i = 7; i <= 40; i++) {
        const major = i === 12 || i === 27;
        s += vline(px(i) + 0.7, 1759, major ? 1774 : 1768, i === 7 ? '#ccc' : '#777', major ? 2.4 : 1.4);
    }
    s += text(17, 1807, '20231130', 'date') + text(232, 1807, '20231218', 'date') +
        text(592, 1807, '20240109', 'date') + text(952, 1807, '202', 'date');
    document.getElementById('axis').innerHTML = s;
}

drawKline();
drawVolume();
drawMacd();
drawAxis();
```
